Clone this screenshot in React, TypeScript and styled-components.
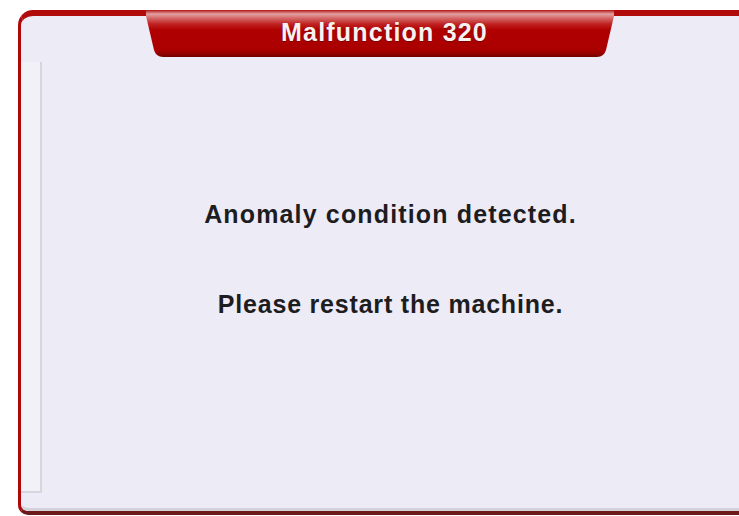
import React from "react";
import styled, { createGlobalStyle } from "styled-components";

const Global = createGlobalStyle`
  html, body {
    margin: 0;
    padding: 0;
    background: #ffffff;
    overflow: hidden;
  }
  body {
    font-family: "Liberation Sans", Arial, Helvetica, sans-serif;
  }
`;

const Frame = styled.div`
  box-sizing: border-box;
  margin: 10px 0 0 18px;
  width: 721px;
  height: 505px;
  display: flex;
  flex-direction: column;
  background: #edebf6;
  border-top: 6px solid #b10b0b;
  border-left: 3px solid #b00808;
  border-bottom: 4px solid #6e1a1a;
  border-radius: 15px 0 0 10px;
`;

const Panel = styled.div`
  flex: 1;
  display: flex;
  flex-direction: column;
  border-bottom: 3px solid #d3d2db;
  border-bottom-left-radius: 8px;
`;

const Header = styled.div`
  height: 41px;
  display: flex;
  justify-content: center;
`;

const Tab = styled.div`
  box-sizing: border-box;
  width: 468px;
  height: 47px;
  margin-top: -6px;
  padding: 10px 0 0 9px;
  text-align: center;
  clip-path: path("M0 0 H468 V6 L460 40 Q458 47 451 47 H17 Q10 47 8 40 L0 6 Z");
  background: linear-gradient(
    to bottom,
    #b51414 0px,
    #e3a2a2 4px,
    #d56a6a 8px,
    #c02222 14px,
    #b00000 20px,
    #aa0000 40px,
    #930000 44px,
    #6e0000 47px
  );
`;

const Title = styled.span`
  display: inline-block;
  font-size: 25px;
  line-height: 25px;
  font-weight: 700;
  letter-spacing: 1.2px;
  color: #f7f1f1;
  text-shadow: 0 1px 1px rgba(80, 0, 0, 0.6);
`;

const Body = styled.div`
  flex: 1;
  display: flex;
  padding: 5px 0 15px;
`;

const Rail = styled.div`
  box-sizing: border-box;
  width: 21px;
  background: #f2f1f8;
  border-right: 2px solid #d7d6df;
  border-bottom: 2px solid #d7d6df;
`;

const Message = styled.div`
  flex: 1;
  display: flex;
  flex-direction: column;
  align-items: center;
  padding-top: 140px;
`;

const Line = styled.div<{ $gap?: number; $spacing?: number }>`
  margin-top: ${(p) => p.$gap ?? 0}px;
  font-size: 25px;
  line-height: 25px;
  font-weight: 700;
  letter-spacing: ${(p) => p.$spacing ?? 1.15}px;
  color: #1d1d1f;
`;

export default function App() {
  return (
    <>
      <Global />
      <Frame>
        <Panel>
          <Header>
            <Tab>
              <Title>Malfunction 320</Title>
            </Tab>
          </Header>
          <Body>
            <Rail />
            <Message>
              <Line>Anomaly condition detected.</Line>
              <Line $gap={65} $spacing={0.8}>
                Please restart the machine.
              </Line>
            </Message>
          </Body>
        </Panel>
      </Frame>
    </>
  );
}
